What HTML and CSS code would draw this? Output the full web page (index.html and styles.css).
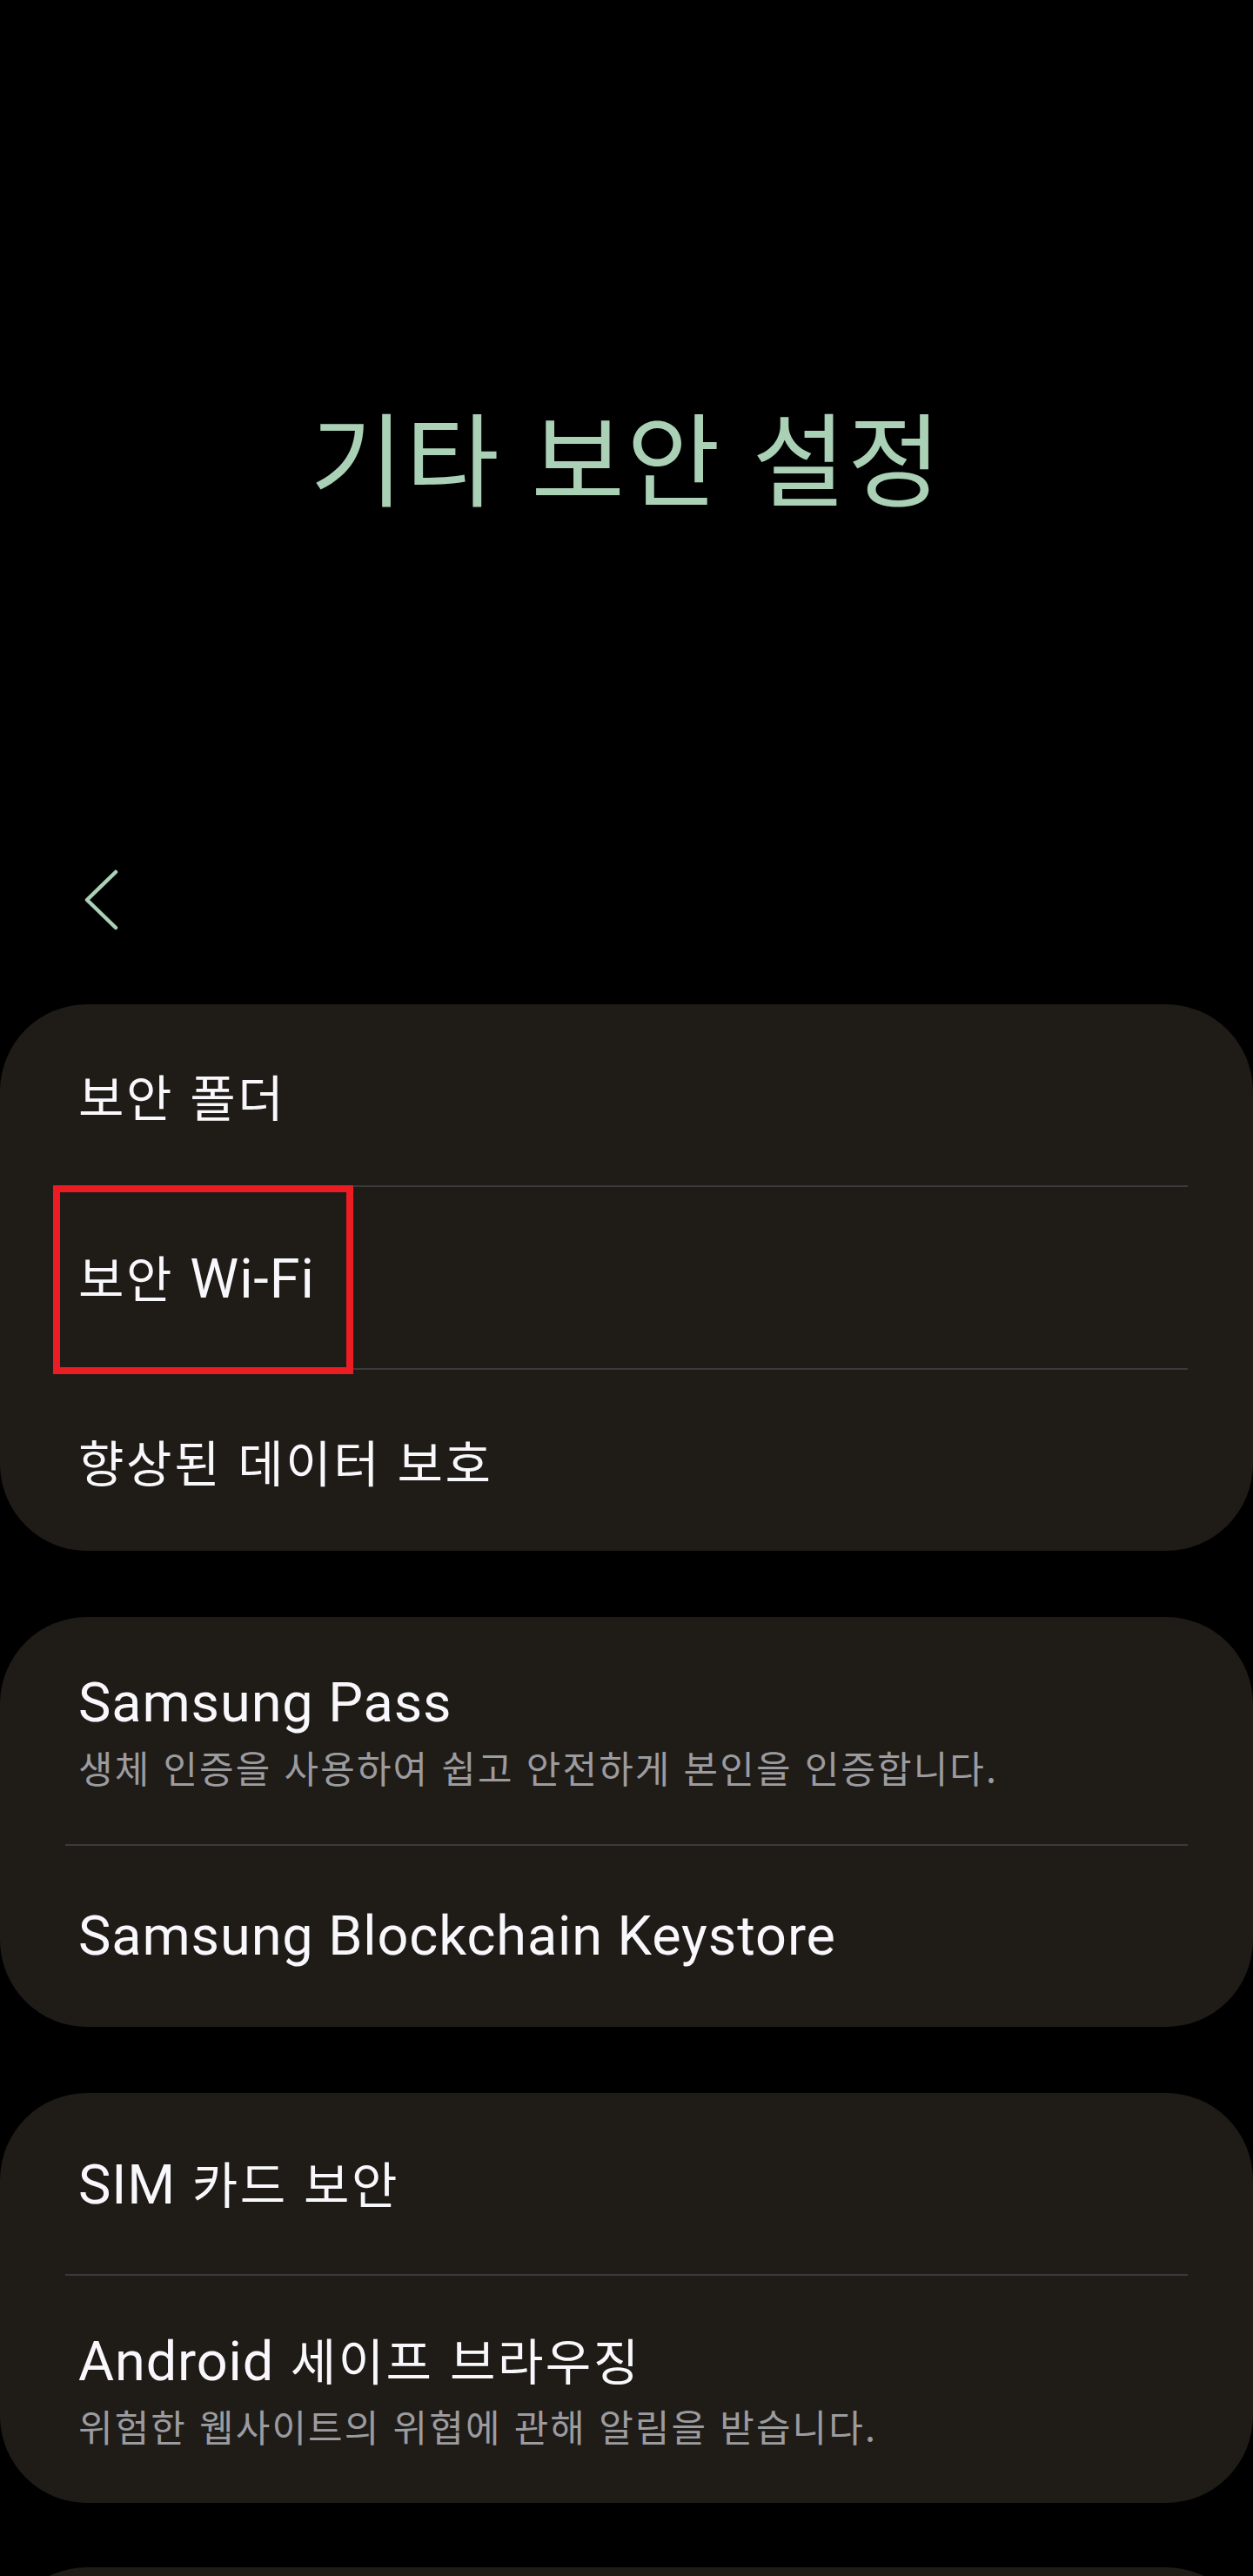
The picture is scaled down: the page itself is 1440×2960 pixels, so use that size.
FILE: index.html
```html
<!DOCTYPE html>
<html lang="ko">
<head>
  <meta charset="UTF-8" />
  <meta name="viewport" content="width=device-width, initial-scale=1.0"/>
  <title>기타 보안 설정</title>
  <link rel="stylesheet" href="styles.css">
</head>
<body>
  <header class="hero">
    <h1>기타 보안 설정</h1>
  </header>

  <nav class="nav">
    <svg class="back" width="50" height="80" viewBox="0 0 50 80">
      <path d="M43 8 L10 40 L43 72" />
    </svg>
  </nav>

  <section class="card">
    <div class="row"><span class="title">보안 폴더</span></div>
    <div class="divider"></div>
    <div class="row">
      <span class="title">보안 <span class="lat">Wi-Fi</span></span>
      <div class="mark"></div>
    </div>
    <div class="divider"></div>
    <div class="row"><span class="title">향상된 데이터 보호</span></div>
  </section>

  <section class="card">
    <div class="row two">
      <div class="title"><span class="lat">Samsung Pass</span></div>
      <div class="sub">생체 인증을 사용하여 쉽고 안전하게 본인을 인증합니다.</div>
    </div>
    <div class="divider"></div>
    <div class="row"><span class="title lat">Samsung Blockchain Keystore</span></div>
  </section>

  <section class="card">
    <div class="row"><span class="title"><span class="lat">SIM</span> 카드 보안</span></div>
    <div class="divider"></div>
    <div class="row two">
      <div class="title"><span class="lat">Android</span> 세이프 브라우징</div>
      <div class="sub">위험한 웹사이트의 위협에 관해 알림을 받습니다.</div>
    </div>
  </section>

  <section class="card last"></section>
</body>
</html>
```

FILE: styles.css
```css
body {
  margin: 0;
  background: #000;
  color: #f8f8fc;
  font-family: "Noto Sans CJK KR", Roboto, sans-serif;
  font-size: 57px;
  letter-spacing: 2.5px;
}

.lat {
  font-family: Roboto, "Noto Sans CJK KR", sans-serif;
  font-size: 63px;
  letter-spacing: 0.9px;
}

.hero {
  padding-top: 452px;
  text-align: center;
}

.hero h1 {
  margin: 0;
  font-size: 117px;
  font-weight: 400;
  line-height: 140px;
  letter-spacing: 2px;
  color: #aad0b6;
}

.nav {
  height: 120px;
  margin-top: 382px;
  padding-left: 90px;
  display: flex;
  align-items: center;
}

.back path {
  fill: none;
  stroke: #aad0b6;
  stroke-width: 4.5;
  stroke-linecap: round;
  stroke-linejoin: round;
}

.card {
  margin-top: 76px;
  background: #1f1c17;
  border-radius: 100px;
  overflow: hidden;
}

.nav + .card {
  margin-top: 60px;
}

.card.last {
  margin-top: 74px;
  height: 200px;
}

.row {
  position: relative;
  height: 208px;
  padding-left: 90px;
  display: flex;
  align-items: center;
}

.row.two {
  height: 261px;
  flex-direction: column;
  align-items: flex-start;
  justify-content: center;
}

.title {
  line-height: 74px;
  white-space: nowrap;
}

.row.two .title {
  margin-top: -4px;
}

.sub {
  margin-top: 8px;
  font-size: 43px;
  line-height: 56px;
  letter-spacing: 2.1px;
  color: #9b9ba0;
}

.divider {
  height: 2px;
  margin: 0 75px;
  background: #3a3a3d;
}

.mark {
  position: absolute;
  left: 61px;
  top: -2px;
  width: 329px;
  height: 201px;
  border: 8px solid #ec1c24;
}
```
